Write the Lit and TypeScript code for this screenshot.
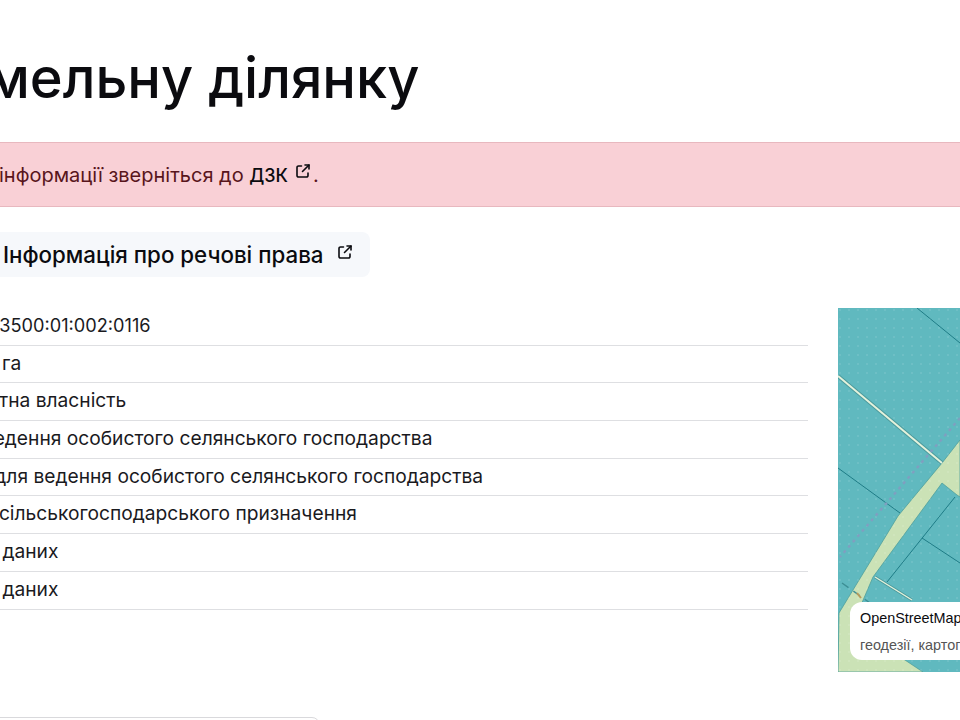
import { LitElement, html, css } from "lit";
import { customElement } from "lit/decorators.js";

const ext = html`<svg class="ext" viewBox="0 0 16 16" fill="none" stroke="currentColor" stroke-width="1.6" stroke-linecap="round" stroke-linejoin="round"><path d="M6.5 3H3.5A1.5 1.5 0 0 0 2 4.5v8A1.5 1.5 0 0 0 3.5 14h8a1.5 1.5 0 0 0 1.5-1.5V10"/><path d="M7.5 8.5 14 2"/><path d="M10 2h4v4"/></svg>`;

const rows = [
  { text: "5322483500:01:002:0116", cls: "code" },
  { text: "0.1200 га", cls: "area" },
  { text: "Приватна власність", cls: "" },
  { text: "Для ведення особистого селянського господарства", cls: "" },
  { text: "01.03 для ведення особистого селянського господарства", cls: "" },
  { text: "Землі сільськогосподарського призначення", cls: "" },
  { text: "Нема даних", cls: "none" },
  { text: "Нема даних", cls: "none" },
];

@customElement("app-root")
export class AppRoot extends LitElement {
  static styles = css`
    :host { display: block; width: 960px; height: 720px; overflow: hidden; background: #fff; font-family: Inter, "Noto Sans", sans-serif; color: #0b0b0f; }
    .page { margin-left: -600px; width: 1800px; }
    h1 { margin: 0; padding: 44px 0 0 79.5px; font-size: 56px; line-height: 68px; font-weight: 500; white-space: nowrap; box-sizing: border-box; height: 142px; }
    .alert { height: 65px; box-sizing: border-box; background: #f9d0d6; border: 1px solid #e8b8bf; border-width: 1px 0; color: #58151c; font-size: 20px; line-height: 64px; padding-left: 340px; white-space: nowrap; }
    .alert b { font-weight: 500; font-size: 18px; color: #0b0b0f; }
    .ext { width: 16px; height: 16px; display: inline-block; flex: none; }
    .alert .ext { margin-left: 7.5px; margin-right: 1.5px; vertical-align: 3px; color: #0b0b0f; }
    .btns { display: flex; margin-top: 25px; }
    .btn { margin-left: 560px; width: 410px; height: 45px; box-sizing: border-box; background: #f6f8fb; border-radius: 8px; padding-left: 43px; display: flex; align-items: center; font-size: 22.3px; font-weight: 500; white-space: nowrap; gap: 13px; }
    .btn .ext { margin-top: -5px; }
    .main { display: flex; margin-top: 31px; gap: 30px; align-items: flex-start; }
    .list { flex: none; width: 808px; margin-left: 600px; }
    .row { height: 37.7px; box-sizing: border-box; border-bottom: 1px solid #dedfe2; font-size: 19.2px; line-height: 35px; white-space: nowrap; color: #1a1a1e; }
    .row span { display: block; margin-left: -60px; }
    .row span.code { font-size: 18.2px; margin-left: -68px; }
    .row span.area { margin-left: -62.5px; }
    .row span.none { margin-left: -54px; }
    .map { position: relative; flex: none; width: 360px; height: 364px; }
    .map svg { display: block; width: 360px; height: 364px; }
    .pop { position: absolute; left: 12px; top: 294px; width: 300px; height: 58px; box-sizing: border-box; background: #fff; border-radius: 12px; padding: 6px 10px; font-family: "Liberation Sans", sans-serif; font-size: 14.4px; line-height: 20px; white-space: nowrap; }
    .pop div + div { margin-top: 7px; color: #555; }
    .edge { margin-left: 580px; width: 340px; box-sizing: border-box; height: 20px; margin-top: 45px; border: 1px solid #d9d9dc; border-radius: 8px; }
  `;

  render() {
    return html`<div class="page">
      <h1>Інформація про земельну ділянку</h1>
      <div class="alert">Для отримання детальної інформації зверніться до <b>ДЗК</b>${ext}.</div>
      <div class="btns"><div class="btn">Інформація про речові права ${ext}</div></div>
      <div class="main">
        <div class="list">${rows.map((r) => html`<div class="row"><span class=${r.cls}>${r.text}</span></div>`)}</div>
        <div class="map">
          <svg viewBox="0 0 360 364">
            <defs><pattern id="d" width="9" height="9" patternUnits="userSpaceOnUse"><circle cx="2" cy="2" r=".8" fill="#fff" fill-opacity=".2"/></pattern></defs>
            <rect width="360" height="364" fill="#60b9bf"/>
            <path d="M122 132 104 155 60 208 1 305 0 364H85L67 352 14 318 35 269 104 175 119 187 122 189Z" fill="#cbe2b6" stroke="#4f9f9c" stroke-width=".8"/>
            <rect width="360" height="364" fill="url(#d)"/>
            <path d="M0 68 104 155" stroke="#4b9a9c" stroke-width="4" fill="none"/>
            <path d="M0 68 104 155" stroke="#e4f2dc" stroke-width="2" fill="none"/>
            <path d="M79 0 122 35M0 160 62 205M117 189 49 274M84 230 122 255" stroke="#1f7c86" stroke-width="1" fill="none"/>
            <path d="M37 269 74 292" stroke="#4b9a9c" stroke-width="3" fill="none"/>
            <path d="M37 269 74 292" stroke="#e4f2dc" stroke-width="1.4" fill="none"/>
            <path d="M4 275 32 295" stroke="#3d8f95" stroke-width="1.4" stroke-dasharray="8 6" fill="none"/>
            <path d="M19 285 23 290" stroke="#b99a5a" stroke-width="2" fill="none"/>
            <path d="M122 110 2 249" stroke="#7f9fc0" stroke-width="2.4" stroke-dasharray="3 4" fill="none"/>
          </svg>
          <div class="pop"><div>OpenStreetMap contributors</div><div>геодезії, картографії та кадастру</div></div>
        </div>
      </div>
      <div class="edge"></div>
    </div>`;
  }
}
